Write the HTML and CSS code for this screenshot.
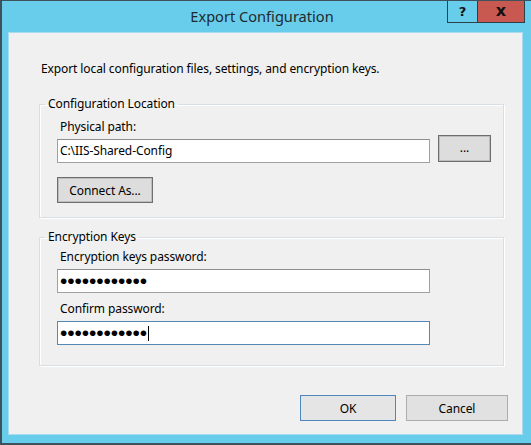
FILE: index.html
```html
<!DOCTYPE html>
<html>
<head>
<meta charset="utf-8">
<link rel="stylesheet" href="styles.css">
</head>
<body>
<div class="window">
  <div class="titlebar">
    <div class="spacer"></div>
    <div class="title">Export Configuration</div>
    <div class="caption-btns">
      <div class="cbtn help">?</div>
      <div class="cbtn close">x</div>
    </div>
  </div>
  <div class="client">
    <p class="desc">Export local configuration files, settings, and encryption keys.</p>
    <fieldset class="group group-loc">
      <legend>Configuration Location</legend>
      <div class="label">Physical path:</div>
      <div class="path-row">
        <div class="textbox">C:\IIS-Shared-Config</div>
        <div class="btn btn-dark btn-browse">...</div>
      </div>
      <div class="btn btn-dark btn-connect">Connect As...</div>
    </fieldset>
    <fieldset class="group group-keys">
      <legend>Encryption Keys</legend>
      <div class="label">Encryption keys password:</div>
      <div class="textbox pw">••••••••••••</div>
      <div class="label label2">Confirm password:</div>
      <div class="textbox pw focused">••••••••••••<span class="caret"></span></div>
    </fieldset>
    <div class="footer">
      <div class="btn btn-ok">OK</div>
      <div class="btn btn-cancel">Cancel</div>
    </div>
  </div>
</div>
</body>
</html>
```

FILE: styles.css
```css
* { box-sizing: border-box; }
html, body { margin: 0; padding: 0; }
body {
  font-family: "Noto Sans", "Open Sans", sans-serif;
  font-size: 12px;
  letter-spacing: -0.1px;
  color: #000;
  background: #fff;
}
.window {
  width: 531px;
  height: 445px;
  background: #68cdea;
  border-top: 1px solid #3e515c;
  border-left: 2px solid #3e515c;
  border-bottom: 2px solid #3e515c;
  padding: 0 8px 8px 6px;
  display: flex;
  flex-direction: column;
}
.titlebar {
  height: 31px;
  display: flex;
  flex-shrink: 0;
}
.spacer { width: 69px; flex-shrink: 0; }
.title {
  flex: 1;
  text-align: center;
  font-size: 14.6px;
  letter-spacing: 0;
  line-height: 31px;
  color: #1f2a30;
}
.caption-btns {
  display: flex;
  align-self: flex-start;
  margin-right: -2px;
}
.cbtn {
  height: 22px;
  display: flex;
  align-items: center;
  justify-content: center;
  font-family: "DejaVu Sans", sans-serif;
  font-weight: bold;
  letter-spacing: 0;
  color: #111;
  border-left: 1px solid #2d3f49;
  border-bottom: 1px solid #2d3f49;
}
.help { width: 30px; font-size: 13px; }
.close {
  width: 48px;
  background: #c75950;
  border-right: 1px solid #2d3f49;
  font-size: 16px;
  padding-bottom: 3px;
}
.client {
  flex: 1;
  background: #f0f0f0;
  border: 1px solid #a9dcee;
  padding: 28px 14px 0 30px;
}
.desc {
  margin: 0 0 19px 2px;
  line-height: 16px;
}
.group {
  width: 465px;
  margin: 0;
  border: 1px solid #d5dfe5;
  box-shadow: 1px 1px 0 #fff, inset 1px 1px 0 #fff;
  padding: 0 12px 0 17px;
}
.group legend {
  margin-left: -12px;
  padding: 0 3px;
  line-height: 16px;
}
.group-loc { padding-top: 7px; padding-bottom: 14px; }
.group-keys { margin-top: 11px; padding-top: 4px; padding-bottom: 20px; }
.label {
  line-height: 16px;
  padding-left: 3px;
}
.label2 { margin-top: 8px; }
.path-row {
  display: flex;
  align-items: flex-start;
  gap: 8px;
}
.textbox {
  width: 373px;
  height: 24px;
  background: #fff;
  border: 1px solid #a0a0a0;
  border-top-color: #8e8e8e;
  padding: 0 2px;
  line-height: 22px;
  white-space: nowrap;
}
.path-row .textbox { margin-top: 4px; }
.group-keys .textbox { margin-top: 4px; }
.textbox.focused { border-color: #5687b5; }
.pw {
  font-family: "Liberation Sans", sans-serif;
  font-size: 21px;
  line-height: 22px;
  letter-spacing: -0.1px;
  padding-left: 2px;
  display: flex;
  align-items: center;
}
.caret {
  display: inline-block;
  width: 1px;
  height: 15px;
  background: #000;
  margin-left: 1px;
}
.btn {
  display: flex;
  align-items: center;
  justify-content: center;
  background: #e1e1e1;
  border: 1px solid #adadad;
  color: #000;
}
.btn-dark {
  border-color: #6e6e6e;
  box-shadow: inset 0 0 0 1px #bdbdbd;
  background: #dddddd;
}
.btn-browse { width: 53px; height: 27px; padding-bottom: 2px; }
.btn-connect { width: 96px; height: 26px; margin-top: 14px; }
.footer {
  display: flex;
  justify-content: flex-end;
  gap: 10px;
  margin-top: 29px;
}
.btn-ok {
  width: 96px;
  height: 26px;
  border-color: #4c87bd;
  background: #e5e5e5;
}
.btn-cancel { width: 102px; height: 26px; }
```
